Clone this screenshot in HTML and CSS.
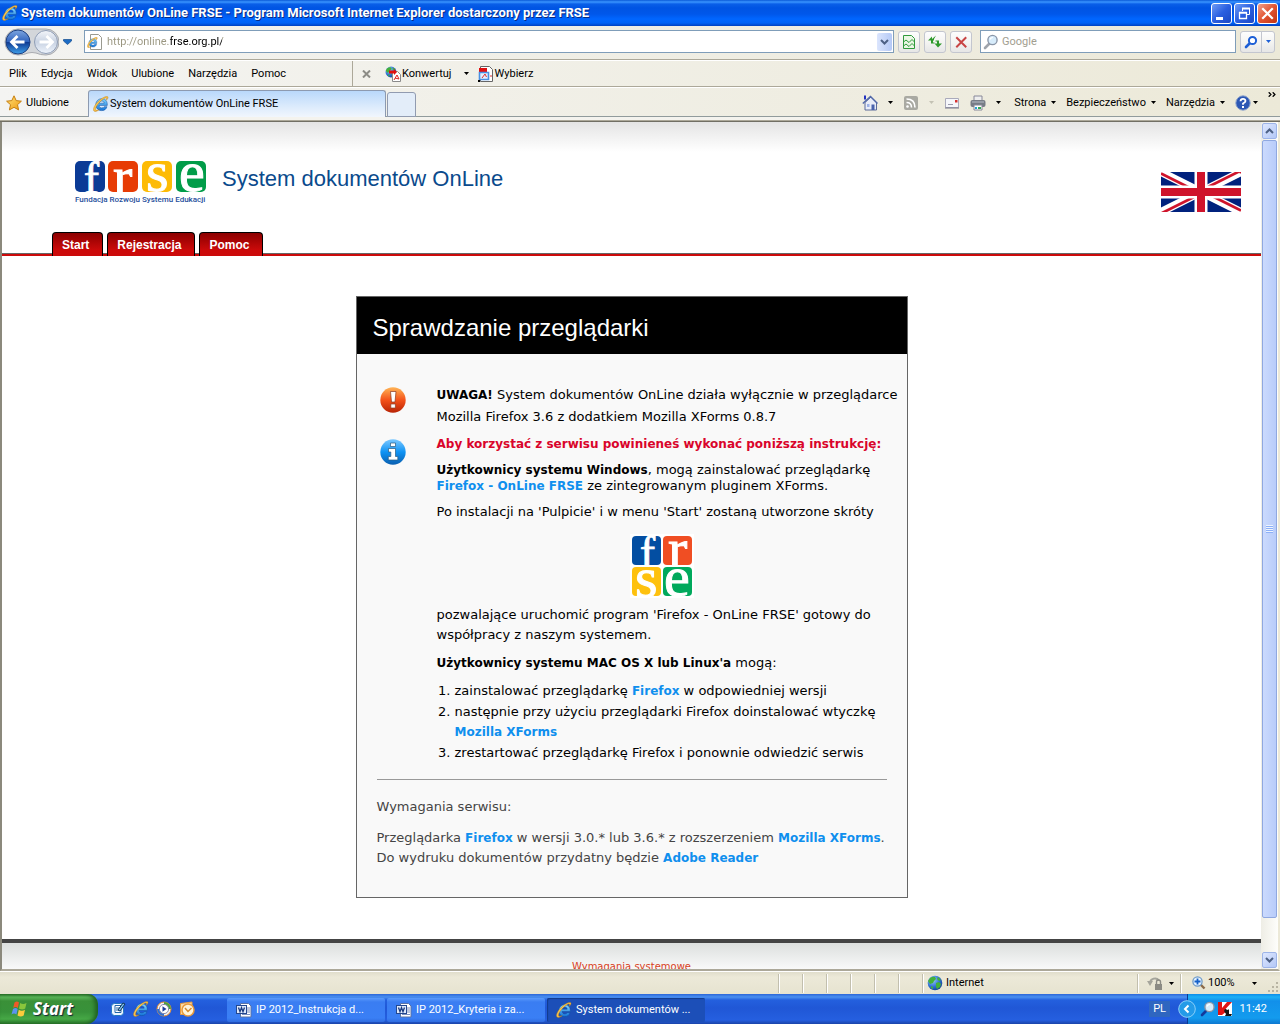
FILE: index.html
```html
<!DOCTYPE html>
<html lang="pl">
<head>
<meta charset="utf-8">
<title>System dokumentów OnLine FRSE</title>
<link rel="stylesheet" href="styles.css">
</head>
<body>
<svg class="defs" aria-hidden="true">
  <defs>
    <linearGradient id="gGold" x1="0" y1="0" x2="1" y2="1"><stop offset="0" stop-color="#ffe27a"/><stop offset="1" stop-color="#f09a10"/></linearGradient>
    <linearGradient id="gIe" x1="0" y1="0" x2="0" y2="1"><stop offset="0" stop-color="#7fd4ff"/><stop offset="1" stop-color="#1474d8"/></linearGradient>
    <linearGradient id="gBack" x1="0" y1="0" x2="0" y2="1"><stop offset="0" stop-color="#7ea6e0"/><stop offset=".5" stop-color="#2f62bd"/><stop offset=".52" stop-color="#103c94"/><stop offset="1" stop-color="#3fa0ea"/></linearGradient>
    <linearGradient id="gFwd" x1="0" y1="0" x2="0" y2="1"><stop offset="0" stop-color="#f4f6fa"/><stop offset=".5" stop-color="#c8d2e2"/><stop offset="1" stop-color="#eef4fc"/></linearGradient>
    <linearGradient id="gWarn" x1="0" y1="0" x2="0" y2="1"><stop offset="0" stop-color="#ffb455"/><stop offset=".5" stop-color="#f4521a"/><stop offset="1" stop-color="#b82406"/></linearGradient>
    <linearGradient id="gInfo" x1="0" y1="0" x2="0" y2="1"><stop offset="0" stop-color="#7cc8ff"/><stop offset=".5" stop-color="#0f93f4"/><stop offset="1" stop-color="#0a5fb0"/></linearGradient>
    <radialGradient id="gGlobe" cx=".35" cy=".3" r=".8"><stop offset="0" stop-color="#9cd0ff"/><stop offset=".6" stop-color="#2a6cd0"/><stop offset="1" stop-color="#123a88"/></radialGradient>
    <clipPath id="tile"><rect width="30" height="31" rx="5"/></clipPath>
    <clipPath id="tile-small"><rect width="29" height="29" rx="4"/></clipPath>
    <symbol id="ie" viewBox="0 0 16 16">
      <path d="M14.300 9.400H6.100c.2 1.700 1.300 2.500 2.800 2.500 1.100 0 1.800-.4 2.200-1.200h2.900c-.8 2.500-2.600 3.900-5.300 3.900-3.500 0-5.900-2.300-5.900-5.800s2.400-6.100 6-6.100c3.700 0 5.700 2.500 5.500 6.700zM6.200 7.200h5c-.2-1.300-1-2.200-2.400-2.200S6.500 5.900 6.200 7.200z" fill="url(#gIe)" stroke="#0e4c9c" stroke-width=".5"/>
      <path d="M13.200 4.400C15.800 1.800 15.400.2 13.400.5 9.800 1 4 5.600 1.500 10.200c-1.700 3.200-1.400 5.700 1.300 5.200 1.200-.2 2.400-1 3.500-1.900-1.700 1-3.500 1.300-3.700 0C2.300 11 6.100 6 10.300 3.100c2.200-1.500 4.300-2 2.900 1.300z" fill="url(#gGold)" stroke="#b87a10" stroke-width=".4"/>
    </symbol>
    <symbol id="caret" viewBox="0 0 5 3"><path d="M0 0h5L2.500 3z" fill="currentColor"/></symbol>
    <symbol id="lens" viewBox="0 0 16 16"><path d="M6.500 9.500 2 14" stroke="currentColor" stroke-width="2.600" stroke-linecap="round"/><circle cx="9.500" cy="6" r="4.600" fill="#d7ecfb" stroke="#8a96a8" stroke-width="1.400"/><path d="M7 5.500Q7.500 3.500 10 3.500" stroke="#fff" fill="none" stroke-width="1.200"/></symbol>
    <symbol id="word" viewBox="0 0 16 16"><path d="M4.500 1.500h8l2.500 2.500v11H4.500z" fill="#fff" stroke="#5872a8"/><path d="M11 6h3M11 8h3M11 10h3M6 12.500h8" stroke="#7a90c0"/><rect x=".5" y="3.500" width="10" height="8" fill="#dfe9fb" stroke="#23478f"/><path d="m2.500 5.500 1.500 4.200 1.500-4 1.500 4 1.500-4.200" fill="none" stroke="#16387f" stroke-width="1.300"/></symbol>
    <symbol id="globe" viewBox="0 0 16 16"><circle cx="8" cy="8" r="7.300" fill="url(#gGlobe)"/><path d="M3 3q3-2 5-1l1 2-2 2-1 2-3 1-2-3zM9 8l3-1 2 2-1 3-3 2-1-2zM11 2l3 3-2 1-2-2zM4 11l2 1v2l-2-1z" fill="#43b13a"/></symbol>
  </defs>
</svg>

<header class="titlebar">
  <svg class="i16"><use href="#ie"/></svg>
  <span class="window-title">System dokumentów OnLine FRSE - Program Microsoft Internet Explorer dostarczony przez FRSE</span>
  <div class="window-buttons">
    <button aria-label="Minimalizuj"><svg viewBox="0 0 19 19"><path d="M4 13h7v3H4z" fill="#fff"/></svg></button>
    <button aria-label="Przywróć"><svg viewBox="0 0 19 19"><path d="M7.500 7V4.500h7v6H12" fill="none" stroke="#fff"/><path d="M7 4.500h8" stroke="#fff" stroke-width="2"/><path d="M4.500 8.500h7v6h-7zM4 9h8" fill="none" stroke="#fff" stroke-width="1.300"/></svg></button>
    <button class="close" aria-label="Zamknij"><svg viewBox="0 0 19 19"><path d="m5 5 9 9m0-9-9 9" stroke="#fff" stroke-width="2.200" stroke-linecap="square"/></svg></button>
  </div>
</header>

<nav class="navbar">
  <div class="travel">
    <svg viewBox="3 0 56 30">
      <path d="M18 2h28a13 13 0 0 1 0 26q-6 0-10-2-4-1-8 0-4 2-10 2a13 13 0 0 1 0-26z" fill="#d3d6da" stroke="#a9abb0"/>
      <circle cx="18" cy="15" r="12" fill="url(#gBack)" stroke="#1d3f80"/>
      <path d="M17.500 9 11.500 15l6 6M12 15h12.500" fill="none" stroke="#fff" stroke-width="2.800"/>
      <circle cx="46" cy="15" r="11.500" fill="url(#gFwd)" stroke="#8f9db5"/>
      <path d="m46.500 9 6 6-6 6M52 15H39.500" fill="none" stroke="#fff" stroke-width="2.800"/>
    </svg>
  </div>
  <button class="flat recent" aria-label="Ostatnie strony"><svg viewBox="0 0 9 6"><path d="M.5.5h8v1.500l-4 3.500-4-3.500z" fill="#1b6bc4" stroke="#134a8c" stroke-width=".7"/></svg></button>
  <div class="address">
    <svg class="i16" viewBox="0 0 16 16"><path d="M3.500.5h8l3 3v12h-11z" fill="#fff" stroke="#9a9a90"/><use href="#ie" x="0" y="3" width="11" height="11"/></svg>
    <input class="url" type="text" aria-label="Adres" value="http://online.frse.org.pl/">
    <button class="drop" aria-label="Rozwiń"><svg viewBox="0 0 9 6"><path d="m1 1 3.500 3.500L8 1" fill="none" stroke="#4d6185" stroke-width="2"/></svg></button>
  </div>
  <button class="tool" aria-label="Widok zgodności"><svg class="i16" viewBox="0 0 16 16"><path d="M2.500 1.500h8l3 3v10h-11z" fill="#e9f7e4" stroke="#2f9a3c"/><path d="m2.500 8 2.500-2L8 8.500l3-3L13.500 8M2.500 12 5 10l3 2.500 3-3 2.500 2.500" fill="none" stroke="#2f9a3c"/></svg></button>
  <button class="tool" aria-label="Odśwież"><svg class="i16" viewBox="0 0 16 16"><path d="M1 6.500 5 2.500v2.500L9 1.500 7 5v1.500H6v2h1.500v1H4V6.500z" fill="#2f9a2c"/><path d="M15 9.500 11 13.500 7.500 9.500H10v-2H8.500v-1H12v3z" fill="#2f9a2c"/></svg></button>
  <button class="tool" aria-label="Zatrzymaj"><svg class="i16" viewBox="0 0 16 16"><path d="m4 4 8.500 8.500m0-8.500L4 12.500" stroke="#c84444" stroke-width="2" stroke-linecap="square"/></svg></button>
  <div class="search">
    <svg class="i16"><use href="#lens"/></svg>
    <input type="text" aria-label="Szukaj" placeholder="Google">
  </div>
  <div class="search-buttons">
    <button class="tool" aria-label="Szukaj"><svg class="i16" viewBox="0 0 16 16"><path d="M6.500 9.500 3 13" stroke="#1d5fd6" stroke-width="2.600" stroke-linecap="round"/><circle cx="9.500" cy="6.500" r="3.600" fill="#fff" stroke="#1d5fd6" stroke-width="2"/></svg></button>
    <button class="tool slim" aria-label="Opcje wyszukiwania"><svg class="caret"><use href="#caret"/></svg></button>
  </div>
</nav>

<div class="menubar">
  <div class="menus">
    <button class="flat">Plik</button><button class="flat">Edycja</button><button class="flat">Widok</button><button class="flat">Ulubione</button><button class="flat">Narzędzia</button><button class="flat">Pomoc</button>
  </div>
  <div class="addons">
    <button class="flat" aria-label="Zamknij pasek"><svg class="x8" viewBox="0 0 9 8"><path d="m1 .5 7 7m0-7-7 7" stroke="#8c8c86" stroke-width="2"/></svg></button>
    <button class="flat convert"><svg class="i16" viewBox="0 0 16 16"><use href="#globe" width="12" height="12"/><path d="M7.500 5.500h5l3 3v7h-8z" fill="#fff" stroke="#8a8a8a"/><path d="m9 14 3-5 2 4-4-1" stroke="#d22" fill="none"/><path d="M4 4.500h5V3l3 3-3 3V7.500H4z" fill="#e01010"/></svg>Konwertuj</button>
    <svg class="caret"><use href="#caret"/></svg>
    <button class="flat pick"><svg class="i16" viewBox="0 0 16 16"><path d="M2.500.5h9l3 3v12h-12z" fill="#fff" stroke="#666"/><path d="M1 2h8v4H1z" fill="#e01010"/><path d="M1.500 6.500h9v7h-9z" fill="#e4f0ff" stroke="#4a90e2" stroke-width="1.600"/><path d="m4 12 3-4 1.500 3M12 10h2" stroke="#d33" fill="none"/><path d="M0 14h2v2H0z"/></svg>Wybierz</button>
  </div>
</div>

<div class="tabbar">
  <button class="flat favorites"><svg class="i16" viewBox="0 0 16 16"><path d="m8 .8 2.200 4.800 5.200.6-3.900 3.500 1.100 5.200L8 12.300l-4.600 2.600 1.100-5.200L.6 6.200l5.200-.6z" fill="url(#gGold)" stroke="#c77f10"/></svg>Ulubione</button>
  <div class="tabs">
    <button class="tab"><svg class="i16"><use href="#ie"/></svg>System dokumentów OnLine FRSE</button>
    <button class="new-tab" aria-label="Nowa karta"></button>
  </div>
  <div class="commands">
    <svg class="i16 home" viewBox="0 0 16 16"><path d="M3 7.500 9 2l5.500 5.500V15H3z" fill="#e9edf8" stroke="#5b6a9a"/><path d="M.8 8.500 8.500 1.500l7 7" fill="none" stroke="#5067a8" stroke-width="1.500"/><path d="M2 .5h2v4H2z" fill="#2433c0"/><path d="M9.500 9.500h3V15h-3z" fill="#4a63ad"/><path d="M5 9h2.500v3H5z" fill="#9db1e6"/></svg>
    <svg class="caret"><use href="#caret"/></svg>
    <svg class="i16 rss" viewBox="0 0 16 16"><rect x="1" y="1" width="14" height="14" rx="2" fill="#a9a9a2"/><circle cx="4.500" cy="11.500" r="1.300" fill="#fff"/><path d="M3.500 7.500q5 0 5 5M3.500 4q8.500 0 8.500 8.500" fill="none" stroke="#fff" stroke-width="1.600"/></svg>
    <svg class="caret faded"><use href="#caret"/></svg>
    <svg class="i16 mail" viewBox="0 0 16 16"><path d="M1.500 3.500h13v9h-13z" fill="#f5f6fa" stroke="#aab"/><path d="M1 13h14" stroke="#778"/><path d="M11 5h2.500v2.500H11z" fill="#d63030"/><path d="M4 9.500h5" stroke="#99a"/></svg>
    <svg class="i16 printer" viewBox="0 0 16 16"><path d="M4 1h8v5H4z" fill="#eee" stroke="#889"/><rect x=".5" y="5" width="15" height="7" rx="2" fill="#777c86"/><path d="M2 7h12" stroke="#b9bec8"/><path d="M4 10h8v5H4z" fill="#fff" stroke="#889"/><path d="M5 13h2" stroke="#28a0d8" stroke-width="2"/><path d="M8 13h3" stroke="#3a5" stroke-width="2"/></svg>
    <svg class="caret"><use href="#caret"/></svg>
    <button class="flat strona">Strona<svg class="caret"><use href="#caret"/></svg></button>
    <button class="flat">Bezpieczeństwo<svg class="caret"><use href="#caret"/></svg></button>
    <button class="flat">Narzędzia<svg class="caret"><use href="#caret"/></svg></button>
    <button class="flat help" aria-label="Pomoc"><svg class="i16" viewBox="0 0 16 16"><circle cx="8" cy="8" r="7.200" fill="#2c57b4" stroke="#8fa4cc"/><path d="M5.500 6.200Q5.700 3.800 8 3.800t2.500 2.200Q10.500 7.300 8 8.500v1.200" fill="none" stroke="#fff" stroke-width="1.800"/><path d="M7 11h2v2H7z" fill="#fff"/></svg><svg class="caret"><use href="#caret"/></svg></button>
    <span class="more"><svg viewBox="0 0 8 5"><path d="m.7.300 2.200 2.200L.7 4.700M4.700.300l2.200 2.200-2.200 2.200" fill="none" stroke="#000" stroke-width="1.300"/></svg></span>
  </div>
</div>

<div class="viewport">
  <div class="page">
    <div class="masthead">
      <div class="logo">
        <svg viewBox="0 0 131 31">
          <g class="logo-letters">
            <g><g clip-path="url(#tile)"><rect width="30" height="31" fill="#0b3b96"/><text class="tall" x="9" y="32">f</text></g></g>
            <g transform="translate(33 0)"><g clip-path="url(#tile)"><rect width="30" height="31" fill="#e73c05"/><text x="5" y="35">r</text></g></g>
            <g transform="translate(67 0)"><g clip-path="url(#tile)"><rect width="30" height="31" fill="#fdbb05"/><text x="4" y="30">s</text></g></g>
            <g transform="translate(101 0)"><g clip-path="url(#tile)"><rect width="30" height="31" fill="#019c48"/><text x="3" y="30">e</text></g></g>
          </g>
        </svg>
        <span>Fundacja Rozwoju Systemu Edukacji</span>
      </div>
      <h1>System dokumentów OnLine</h1>
      <a class="flag" href="#en" aria-label="English">
        <svg viewBox="0 0 80 40"><path d="M0 0h80v40H0z" fill="#00217d"/><path d="m0 0 80 40M80 0 0 40" stroke="#fff" stroke-width="8"/><path d="M0 1.500 34 18.500M80 1.500V-1.500L46 15.500M80 38.500 46 21.500M0 41.500 34 24.500" stroke="#cf142b" stroke-width="2.700" fill="none"/><path d="M40 0v40M0 20h80" stroke="#fff" stroke-width="13"/><path d="M40 0v40M0 20h80" stroke="#cf142b" stroke-width="8"/></svg>
      </a>
    </div>
    <nav class="site-nav"><a href="#start">Start</a><a href="#rejestracja">Rejestracja</a><a href="#pomoc">Pomoc</a></nav>

    <main class="card">
      <h2>Sprawdzanie przeglądarki</h2>
      <div class="card-body">
        <section class="notice">
          <svg class="badge" viewBox="0 0 26 26"><circle cx="13" cy="13" r="12.700" fill="url(#gWarn)"/><path d="M10.500 4.500h5.500l-1 10.500h-3.500zM10.800 17h4.600v4h-4.600z" fill="#fff" stroke="#8a3a20" stroke-width=".7"/></svg>
          <p class="loose"><strong>UWAGA!</strong> System dokumentów OnLine działa wyłącznie w przeglądarce Mozilla Firefox 3.6 z dodatkiem Mozilla XForms 0.8.7</p>
        </section>
        <section class="notice">
          <svg class="badge" viewBox="0 0 26 26"><circle cx="13" cy="13" r="12.700" fill="url(#gInfo)"/><path d="M10.500 4h5v3.500h-5zM8.500 9.500h7v8h2.300V21H8.300v-3.500h2.500V13H8.500z" fill="#fff" stroke="#2a5a80" stroke-width=".7"/></svg>
          <div class="steps">
            <p class="alert">Aby korzystać z serwisu powinieneś wykonać poniższą instrukcję:</p>
            <p><strong>Użytkownicy systemu Windows</strong>, mogą zainstalować przeglądarkę <a href="#ff">Firefox - OnLine FRSE</a> ze zintegrowanym pluginem XForms.</p>
            <p>Po instalacji na 'Pulpicie' i w menu 'Start' zostaną utworzone skróty</p>
            <svg class="app-icon" viewBox="0 0 64 64"><path d="M0 0h64v64H0z" fill="#fff"/>
              <g class="logo-letters">
                <g transform="translate(2 2)"><g clip-path="url(#tile-small)"><rect width="29" height="29" fill="#034ea2"/><text class="tall" x="8" y="31">f</text></g></g>
                <g transform="translate(33 2)"><g clip-path="url(#tile-small)"><rect width="29" height="29" fill="#f04e23"/><text x="5" y="32">r</text></g></g>
                <g transform="translate(2 33)"><g clip-path="url(#tile-small)"><rect width="29" height="29" fill="#fec10e"/><text x="3" y="30">s</text></g></g>
                <g transform="translate(33 33)"><g clip-path="url(#tile-small)"><rect width="29" height="29" fill="#00a95c"/><text x="1" y="29">e</text></g></g>
              </g>
            </svg>
            <p class="after">pozwalające uruchomić program 'Firefox - OnLine FRSE' gotowy do współpracy z naszym systemem.</p>
            <p><strong>Użytkownicy systemu MAC OS X lub Linux'a</strong> mogą:</p>
            <ol>
              <li>zainstalować przeglądarkę <a href="#firefox">Firefox</a> w odpowiedniej wersji</li>
              <li>następnie przy użyciu przeglądarki Firefox doinstalować wtyczkę <a href="#xforms">Mozilla XForms</a></li>
              <li>zrestartować przeglądarkę Firefox i ponownie odwiedzić serwis</li>
            </ol>
          </div>
        </section>
        <section class="requirements">
          <p>Wymagania serwisu:</p>
          <p>Przeglądarka <a href="#firefox">Firefox</a> w wersji 3.0.* lub 3.6.* z rozszerzeniem <a href="#xforms">Mozilla XForms</a>.<br>Do wydruku dokumentów przydatny będzie <a href="#reader">Adobe Reader</a></p>
        </section>
      </div>
    </main>
    <footer class="page-footer"><a href="#wymagania">Wymagania systemowe</a></footer>
  </div>
  <div class="scrollbar">
    <button aria-label="W górę"><svg viewBox="0 0 9 6"><path d="M1 5l3.500-3.500L8 5" fill="none" stroke="#4d6185" stroke-width="2"/></svg></button>
    <div class="thumb"><span></span></div>
    <button aria-label="W dół"><svg viewBox="0 0 9 6"><path d="m1 1 3.500 3.500L8 1" fill="none" stroke="#4d6185" stroke-width="2"/></svg></button>
  </div>
</div>

<div class="statusbar">
  <span class="cell"></span><span class="cell"></span><span class="cell"></span><span class="cell"></span><span class="cell"></span><span class="cell"></span>
  <span class="zone"><svg class="i16"><use href="#globe"/></svg>Internet</span>
  <span class="protect"><svg class="i16" viewBox="0 0 16 16"><path d="M3 8a5 5 0 0 1 9-2.500" fill="none" stroke="#a5a59c" stroke-width="2"/><path d="m0 6 6 0-3 5z" fill="#a5a59c"/><rect x="8" y="9" width="7" height="6" fill="#8b8b84"/><path d="M9.500 9V7a2 2 0 0 1 4 0v2" fill="none" stroke="#8b8b84" stroke-width="1.400"/></svg><svg class="caret"><use href="#caret"/></svg></span>
  <span class="zoom"><svg class="i14" viewBox="0 0 14 14"><path d="m8.500 8.500 4 4" stroke="#8a6a4a" stroke-width="2.400"/><circle cx="5.500" cy="5.500" r="4.600" fill="#e4f2ff" stroke="#6f9ac8" stroke-width="1.300"/><path d="M5.500 2.500v6M2.500 5.500h6" stroke="#1560c8" stroke-width="1.800"/></svg>100%<svg class="caret"><use href="#caret"/></svg></span>
  <svg class="grip" viewBox="0 0 12 12"><path d="M8 0h2v2H8zM4 4h2v2H4zM8 4h2v2H8zM0 8h2v2H0zM4 8h2v2H4zM8 8h2v2H8z" fill="#b8b4a2"/></svg>
</div>

<footer class="taskbar">
  <button class="start"><svg viewBox="0 0 18 18"><path d="M4.500 2.500Q7 .5 9 2.500L7.800 8Q5.500 6 3.200 8z" fill="#ee5a28"/><path d="M10.200 3Q13 5 16.500 3l-1.300 5.500q-3 2-6.200 0z" fill="#8ac63c"/><path d="M3 9q2.500-2 4.700 0l-1.300 5.500Q4 12.500 1.500 14.500z" fill="#5b93f0"/><path d="M8.800 9.700q3 2 6.200 0l-1.300 5.800q-3 2-6.200 0z" fill="#fccb3c"/></svg>Start</button>
  <div class="quick">
    <svg class="i16" viewBox="0 0 16 16"><rect x="1.500" y="2.500" width="12" height="12" rx="3" fill="#eef6ff" stroke="#2277c0"/><path d="M5 4.500h6v7H5zM6 7h4M6 9h4" fill="#fff" stroke="#26a"/><path d="m8 9 5-7 2 1-5 7z" fill="#7ec0ee" stroke="#135"/></svg>
    <svg class="i16"><use href="#ie"/></svg>
    <svg class="i16" viewBox="0 0 16 16"><circle cx="8" cy="8" r="7" fill="#f2f2f2" stroke="#e88a2a"/><path d="M8 1a7 7 0 0 1 7 7H8z" fill="#4aa23a"/><path d="M8 15a7 7 0 0 1-7-7h7z" fill="#2f6fd0"/><circle cx="8" cy="8" r="4.600" fill="#fff" stroke="#88a"/><path d="m6.500 5.300 4 2.700-4 2.700z" fill="#1f3f9a"/></svg>
    <svg class="i16" viewBox="0 0 16 16"><path d="M1.500 2.500 13 1v5H5v7.500H1.500z" fill="#fbd9a4" stroke="#e99a3c"/><circle cx="9" cy="9" r="6" fill="#fff4dc" stroke="#e99a3c" stroke-width="1.500"/><path d="m6 7 3 3.500L12.500 7" fill="none" stroke="#d78a2a" stroke-width="1.500"/></svg>
  </div>
  <div class="tasks">
    <button><svg class="i16"><use href="#word"/></svg><span>IP 2012_Instrukcja d...</span></button>
    <button><svg class="i16"><use href="#word"/></svg><span>IP 2012_Kryteria i za...</span></button>
    <button class="active"><svg class="i16"><use href="#ie"/></svg><span>System dokumentów ...</span></button>
  </div>
  <span class="lang">PL</span>
  <div class="tray">
    <button class="chevron" aria-label="Pokaż ukryte ikony"><svg viewBox="0 0 18 18"><circle cx="9" cy="9" r="8.300" fill="#249be8" stroke="#8cd0f8"/><path d="m10.500 5.500-3.500 3.500 3.500 3.500" fill="none" stroke="#fff" stroke-width="2"/></svg></button>
    <svg class="i16 tray-lens"><use href="#lens"/></svg>
    <svg class="i16" viewBox="0 0 16 16"><path d="M1 1h14v14H1z" fill="#fff"/><path d="M1 1h4v6l5-6h5L8.500 8 10 10 5 14H1z" fill="#e01414"/><path d="m8 8 3 1 1-1v5h3l-1 2H8l1-2-2-3z" fill="#151515"/></svg>
    <span class="clock">11:42</span>
  </div>
</footer>
</body>
</html>
```

FILE: styles.css
```css
:root {
  --ui: "Roboto", "Noto Sans", sans-serif;
  --link: #0f8fee;
  --edge: #7f9db9;
}
* { box-sizing: border-box; }
body {
  margin: 0;
  height: 100vh;
  display: flex;
  flex-direction: column;
  overflow: hidden;
  background: #ece9d8;
  font: 11px/14px var(--ui);
  color: #000;
}
button, input { font: inherit; color: inherit; padding: 0; margin: 0; border: 0; background: none; }
h1, h2, p, ol { margin: 0; }
svg { flex: none; display: block; }
a { text-decoration: none; }
.defs { position: absolute; width: 0; height: 0; }
.i16 { width: 16px; height: 16px; }
.i14 { width: 14px; height: 14px; }
.caret { width: 5px; height: 3px; color: #000; }
.faded { color: #c4c2b4; }
.flat { display: flex; align-items: center; white-space: nowrap; }

/* Title bar */
.titlebar {
  flex: none;
  height: 26px;
  display: flex;
  align-items: center;
  gap: 3px;
  padding: 0 2px;
  background: linear-gradient(#0a5ad8, #3a95ff 2px, #0a5fe8 4px, #0054e3 8px, #0057ea 14px, #0066ff 19px, #0062f5 23px, #0040c0);
}
.window-title { flex: 1; color: #fff; font: bold 13px/16px var(--ui); text-shadow: 1px 1px 0 #0a2a80; white-space: nowrap; overflow: hidden; }
.window-buttons { display: flex; gap: 2px; }
.window-buttons button { width: 21px; height: 21px; border: 1px solid #fff; border-radius: 3px; background: linear-gradient(135deg, #6f9cf5, #2a5fe0 50%, #1b48c4); }
.window-buttons .close { background: linear-gradient(135deg, #f0a08a, #e25431 50%, #c03412); }

/* Address row */
.navbar {
  flex: none;
  height: 34px;
  display: flex;
  align-items: center;
  gap: 4px;
  padding: 0 5px 2px 3px;
  background: linear-gradient(90deg, #f3f3f1, #ece9d8);
  border-bottom: 1px solid #aca899;
}
.travel svg { width: 56px; height: 30px; }
.recent { width: 9px; }
.recent svg { width: 9px; height: 6px; }
.address, .search { height: 23px; display: flex; align-items: center; background: #fff; border: 1px solid var(--edge); }
.address { flex: 1; margin-left: 8px; padding: 1px 1px 1px 2px; gap: 4px; }
.url {
  flex: 1;
  min-width: 0;
  outline: 0;
  color: transparent;
  background: linear-gradient(90deg, #9a9680 63px, #000 63px, #000 115px, #9a9680 115px);
  -webkit-background-clip: text;
  background-clip: text;
}
.drop { width: 15px; height: 18px; display: grid; place-items: center; background: linear-gradient(90deg, #dbe5fd, #b5c9f6); border-radius: 2px; }
.drop svg { width: 9px; height: 6px; }
.tool { width: 22px; height: 22px; display: grid; place-items: center; border: 1px solid #c3c6cf; border-radius: 3px; background: linear-gradient(#fdfdfd, #f4f4f2 50%, #e6e6e6); }
.search { width: 256px; margin-left: 4px; padding: 0 2px; gap: 3px; color: #9fa4ac; }
.search input { flex: 1; min-width: 0; }
.search input::placeholder { color: #a29e90; opacity: 1; }
.search-buttons { display: flex; }
.search-buttons .tool:first-child { border-radius: 3px 0 0 3px; }
.search-buttons .slim { width: 14px; margin-left: -1px; border-radius: 0 3px 3px 0; }
.slim .caret { color: #1d5fd6; }

/* Menu row */
.menubar {
  flex: none;
  height: 27px;
  display: flex;
  background: linear-gradient(90deg, #f4f4f2, #ece9d8);
  border-top: 1px solid #fff;
  border-bottom: 1px solid #aca899;
}
.menus { width: 353px; display: flex; align-items: center; gap: 14px; padding-left: 9px; border-right: 1px solid #aca899; }
.addons { display: flex; align-items: center; padding-left: 9px; }
.x8 { width: 9px; height: 8px; }
.convert, .pick { gap: 1px; }
.convert { margin: 0 12px 0 14px; }
.pick { margin-left: 9px; }

/* Tab row */
.tabbar {
  flex: none;
  height: 35px;
  display: flex;
  border-top: 1px solid #fff;
  background: linear-gradient(transparent 28px, #919b9c 28px, #919b9c 29px, #f4f3ee 29px, #f4f3ee 32px, #aca899 32px, #aca899 33px, #716f64 33px), linear-gradient(90deg, #f4f4f2, #ece9d8);
}
.favorites { width: 82px; height: 29px; padding-left: 6px; gap: 4px; }
.tabs { display: flex; align-items: flex-start; padding: 2px 0 0 6px; gap: 1px; }
.tab { width: 298px; height: 27px; display: flex; align-items: center; gap: 1px; padding-left: 4px; border: 1px solid #8d9ab0; border-bottom: 0; border-radius: 3px 3px 0 0; background: linear-gradient(#b9d8fb, #dcebfc 60%, #f1f6fd); }
.new-tab { width: 29px; height: 25px; margin-top: 2px; border: 1px solid #919bb0; border-radius: 3px 3px 0 0; background: #e3edf9; }
.commands { flex: 1; height: 29px; display: flex; align-items: center; justify-content: flex-end; gap: 10px; padding-right: 4px; }
.commands .flat { gap: 5px; }
.commands .help { gap: 2px; }
.strona { margin-left: 3px; }
.more { align-self: flex-start; padding-top: 4px; }
.more svg { width: 8px; height: 5px; }

/* Viewport */
.viewport { flex: 1; min-height: 0; display: flex; border: 1px solid #716f64; border-width: 0 2px 2px; border-color: #ece9d8 #ece9d8 #aca899 #8b897c; }
.page { flex: 1; min-width: 0; overflow: hidden; background: linear-gradient(#e4e4e4, #fff 30px); }
.masthead { height: 110px; display: flex; align-items: flex-start; padding: 39px 20px 0 73px; }
.logo { width: 131px; color: #1f4f9c; font: 500 8px/12px var(--ui); white-space: nowrap; }
.logo svg { width: 131px; height: 31px; margin-bottom: 2px; }
.logo-letters text { font: 58px "Liberation Serif", serif; fill: #fff; stroke: #fff; }
.logo-letters .tall { font-size: 45px; }
h1 { flex: 1; padding: 4px 0 0 16px; font: 22px/28px "Liberation Sans", sans-serif; color: #0a4a8c; }
.flag { padding-top: 11px; }
.flag svg { width: 80px; height: 40px; }
.site-nav { display: flex; gap: 4px; height: 24px; padding-left: 50px; background: linear-gradient(transparent 21px, #666 21px, #666 22px, #cc0a0a 22px); }
.site-nav a { padding: 0 13px 0 9px; border: 1px solid #000; border-bottom: 0; border-radius: 4px 4px 0 0; background: linear-gradient(#8c0000, #cc0a0a 75%); color: #fff; font: bold 12px/24px "Liberation Sans", sans-serif; }

/* Card */
.card { width: 552px; max-width: 100%; margin: 40px auto 41px; border: 1px solid #666; background: #f9f9f9; font: 13px/16px "DejaVu Sans", sans-serif; }
.card h2 { padding: 17px 16px 12px; background: #000; color: #fff; font: 24px/28px "Liberation Sans", sans-serif; }
.card-body { padding: 30px 20px 29px; }
.card a { color: var(--link); }
.card a, .card strong, .alert { font-size: 12px; font-weight: bold; }
.notice { display: grid; grid-template-columns: 57px 1fr; padding-left: 3px; margin-bottom: 9px; }
.badge { width: 26px; height: 26px; margin-top: 3px; }
.loose, .requirements p { margin-right: -16px; }
.loose { line-height: 21px; }
.steps { display: flex; flex-direction: column; gap: 10px; }
.alert { color: #d9042b; }
.app-icon { width: 64px; height: 64px; align-self: center; margin-top: 4px; }
.after { line-height: 20px; margin-top: -3px; }
.steps ol { padding-left: 18px; line-height: 20px; }
.steps li { margin-bottom: 1px; }
.requirements { margin-top: 15px; padding-top: 17px; border-top: 1px solid #999; color: #444; line-height: 20px; }
.requirements p + p { margin-top: 11px; }

.page-footer { height: 60px; border-top: 4px solid #444; padding-top: 17px; background: linear-gradient(#dcdfde, #fff 32px); text-align: center; font: 10px/14px "DejaVu Sans", sans-serif; }
.page-footer a { color: #d8401c; }

/* Scroll bar */
.scrollbar { width: 17px; display: flex; flex-direction: column; padding: 1px; gap: 1px; background: linear-gradient(90deg, #eeede5, #fefefb); }
.scrollbar button { height: 16px; display: grid; place-items: center; border: 1px solid #9db4e8; border-radius: 2px; background: linear-gradient(135deg, #dde7ff, #b4c8f6); }
.scrollbar svg { width: 9px; height: 6px; }
.thumb { flex: 1; margin-bottom: 33px; display: grid; place-items: center; border: 1px solid #8fa8e0; border-radius: 2px; background: linear-gradient(90deg, #cbdafd, #b8ccfa); }
.thumb span { width: 7px; height: 8px; background: repeating-linear-gradient(#eef4fe 0 1px, #8cb0f8 1px 2px); }

/* Status bar */
.statusbar { flex: none; height: 23px; display: flex; align-items: center; justify-content: flex-end; padding: 0 0 0 2px; border-top: 1px solid #fff; background: linear-gradient(#e0ddcb, #ece9d8 5px, #e6e3d0); }
.statusbar span { height: 19px; border-left: 1px solid #c2bfae; box-shadow: inset 1px 0 #fff; display: flex; align-items: center; }
.cell { width: 24px; }
.zone { width: 215px; padding-left: 4px; gap: 3px; }
.protect { width: 43px; padding-left: 9px; gap: 6px; }
.zoom { width: 88px; padding-left: 11px; gap: 2px; }
.zoom .caret { margin-left: auto; margin-right: 11px; }
.grip { width: 12px; height: 12px; align-self: flex-end; }

/* Task bar */
.taskbar { flex: none; height: 30px; display: flex; align-items: center; background: linear-gradient(#2b66d8, #4a90f0 3px, #2460de 6px, #2057d6 14px, #255fe0 26px, #1a44a8); color: #fff; }
.start { width: 98px; height: 30px; display: flex; align-items: center; gap: 5px; padding-left: 10px; border-radius: 0 10px 12px 0; background: linear-gradient(#2c7a2c, #5cb85a 3px, #3a9038 7px, #38923a 18px, #46a846 25px, #2c7a2c); box-shadow: inset -3px 0 4px #1f5f20; font: italic bold 17px/20px "Noto Sans", sans-serif; text-shadow: 1px 1px 1px #123; }
.start svg { width: 18px; height: 18px; }
.quick { width: 128px; display: flex; gap: 7px; padding-left: 12px; }
.tasks { flex: 1; min-width: 0; display: flex; gap: 2px; padding: 2px 0 0 1px; }
.tasks button { width: 158px; height: 24px; display: flex; align-items: center; gap: 4px; padding-left: 9px; border-radius: 2px; background: linear-gradient(#5a9afc, #3a7df2 4px, #3a7ff5 20px, #2f6de0); white-space: nowrap; }
.tasks .active { background: #1c4fb8; box-shadow: inset 1px 1px 1px #123a8c; }
.lang { padding: 1px 4px; margin-right: 17px; background: #2f66c0; }
.tray { width: 93px; height: 30px; display: flex; align-items: center; gap: 1px; border-left: 1px solid #0a3a90; background: linear-gradient(#0d8ce8, #1cb0f6 3px, #1290ea 7px, #139bee 24px, #0e78d0); }
.chevron { width: 18px; margin-left: -10px; }
.chevron svg { width: 18px; height: 18px; }
.tray-lens { color: #123a9c; margin-left: 3px; }
.clock { margin-left: auto; padding-right: 13px; }
```
